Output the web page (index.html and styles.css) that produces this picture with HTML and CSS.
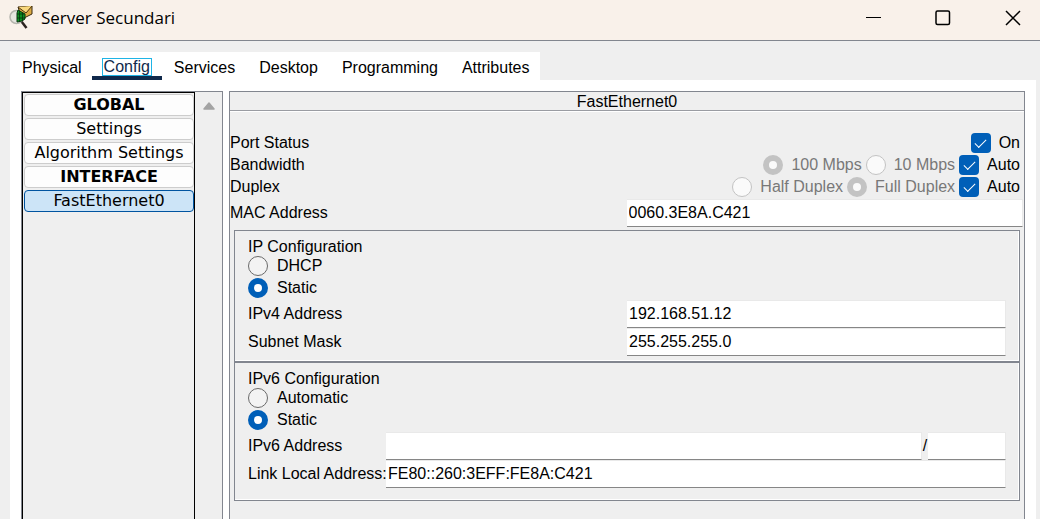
FILE: index.html
```html
<!DOCTYPE html>
<html lang="en">
<head>
<meta charset="utf-8">
<meta name="viewport" content="width=device-width, initial-scale=1">
<title>Server Secundari</title>
<link rel="stylesheet" href="styles.css">
</head>
<body>
<header class="titlebar">
  <svg class="app-icon" viewBox="0 0 24 24" aria-hidden="true">
    <path d="M12.500 15.500 17.500 22" stroke="#2b2320" stroke-width="2.500"/>
    <circle cx="7.500" cy="11" r="6.500" fill="#e6e6e0" stroke="#b5b5ae" stroke-width="1.500"/>
    <path d="M9 1 23 0v8L13 13z" fill="#dcab45" stroke="#3b2a10"/>
    <path d="M9 1l8 6 6-7" fill="#f8d77c" stroke="#4a3413"/>
    <path d="M9 4l7 4v5l-3 2-5 1V7z" fill="#0d8f22" stroke="#0a3510"/>
    <path d="M8 8h7M8 12h8M10.500 5v10M13.500 7v8" stroke="#06330d" fill="none" stroke-width=".8"/>
  </svg>
  <h1 class="title">Server Secundari</h1>
  <div class="window-buttons">
    <button class="window-button" type="button" aria-label="Minimize"><svg viewBox="0 0 16 16"><path d="M1 7.500h15"/></svg></button>
    <button class="window-button" type="button" aria-label="Maximize"><svg viewBox="0 0 16 16"><rect class="thick" x="1" y="1" width="13.500" height="13.500" rx="1.500"/></svg></button>
    <button class="window-button" type="button" aria-label="Close"><svg viewBox="0 0 16 16"><path class="thick" d="M1 1l14 14M15 1 1 15"/></svg></button>
  </div>
</header>
<main class="window">
  <nav class="tabs">
    <button class="tab" type="button">Physical</button>
    <button class="tab tab-active" type="button"><span class="tab-focus">Config</span></button>
    <button class="tab" type="button">Services</button>
    <button class="tab" type="button">Desktop</button>
    <button class="tab" type="button">Programming</button>
    <button class="tab" type="button">Attributes</button>
  </nav>
  <div class="content">
    <aside class="sidebar">
      <div class="side-list">
        <button class="side-button side-heading" type="button">GLOBAL</button>
        <button class="side-button" type="button">Settings</button>
        <button class="side-button" type="button">Algorithm Settings</button>
        <button class="side-button side-heading" type="button">INTERFACE</button>
        <button class="side-button side-selected" type="button">FastEthernet0</button>
      </div>
      <div class="scrollbar">
        <button class="scroll-up" type="button" aria-label="Scroll up"><svg viewBox="0 0 12 8"><path d="M6 1 11 7H1z" fill="#a3a3a3" stroke="#a3a3a3" stroke-width="1.500" stroke-linejoin="round"/></svg></button>
      </div>
    </aside>
    <section class="panel">
      <h2 class="panel-title">FastEthernet0</h2>
      <div class="settings">
        <div class="line">
          <span>Port Status</span>
          <div class="options">
            <label class="option"><input class="check" type="checkbox" checked>On</label>
          </div>
        </div>
        <div class="line">
          <span>Bandwidth</span>
          <div class="options">
            <label class="option option-off"><input class="radio" type="radio" name="bandwidth" checked disabled>100 Mbps</label>
            <label class="option option-off"><input class="radio" type="radio" name="bandwidth" disabled>10 Mbps</label>
            <label class="option"><input class="check" type="checkbox" checked>Auto</label>
          </div>
        </div>
        <div class="line">
          <span>Duplex</span>
          <div class="options">
            <label class="option option-off"><input class="radio" type="radio" name="duplex" disabled>Half Duplex</label>
            <label class="option option-off"><input class="radio" type="radio" name="duplex" checked disabled>Full Duplex</label>
            <label class="option"><input class="check" type="checkbox" checked>Auto</label>
          </div>
        </div>
        <div class="field field-mac">
          <label for="mac">MAC Address</label>
          <input class="text" id="mac" type="text" value="0060.3E8A.C421">
        </div>
      </div>
      <div class="groups">
        <div class="group" role="group" aria-labelledby="ip-title">
          <h3 class="group-title" id="ip-title">IP Configuration</h3>
          <label class="option"><input class="radio" type="radio" name="ip">DHCP</label>
          <label class="option"><input class="radio" type="radio" name="ip" checked>Static</label>
          <div class="fields">
            <div class="field">
              <label for="ipv4">IPv4 Address</label>
              <input class="text" id="ipv4" type="text" value="192.168.51.12">
            </div>
            <div class="field">
              <label for="mask">Subnet Mask</label>
              <input class="text" id="mask" type="text" value="255.255.255.0">
            </div>
          </div>
        </div>
        <div class="group group-v6" role="group" aria-labelledby="ipv6-title">
          <h3 class="group-title" id="ipv6-title">IPv6 Configuration</h3>
          <label class="option"><input class="radio" type="radio" name="ipv6">Automatic</label>
          <label class="option"><input class="radio" type="radio" name="ipv6" checked>Static</label>
          <div class="fields">
            <div class="field field-wide">
              <label for="ipv6">IPv6 Address</label>
              <div class="prefixed">
                <input class="text" id="ipv6" type="text">
                <span class="slash">/</span>
                <input class="text prefix" type="text" aria-label="Prefix length">
              </div>
            </div>
            <div class="field field-wide">
              <label for="link-local">Link Local Address:</label>
              <input class="text" id="link-local" type="text" value="FE80::260:3EFF:FE8A:C421">
            </div>
          </div>
        </div>
      </div>
    </section>
  </div>
</main>
</body>
</html>
```

FILE: styles.css
```css
* { box-sizing: border-box; }

body {
  margin: 0;
  min-height: 100vh;
  display: flex;
  flex-direction: column;
  background: #efefef;
  color: #000;
  font: 16px/20px "Liberation Sans", Arial, sans-serif;
}

button, input { font: inherit; color: inherit; margin: 0; }
button { border: 0; padding: 0; background: none; }
h1, h2, h3 { margin: 0; font-weight: 400; font-size: 16px; }

.titlebar {
  display: flex;
  align-items: center;
  height: 41px;
  padding: 0 4px 5px 9px;
  background: #f9f1ea;
  border-bottom: 1px solid #82868f;
}
.app-icon { width: 24px; height: 24px; margin-right: 8px; }
.title { flex: 1; font: 17px/24px "Open Sans", "Noto Sans", sans-serif; }
.window-buttons { display: flex; gap: 24px; }
.window-button { display: grid; place-items: center; width: 46px; height: 34px; }
.window-button svg { width: 16px; height: 16px; fill: none; stroke: #000; }
.window-button .thick { stroke-width: 1.5; }

.window {
  flex: 1;
  display: flex;
  flex-direction: column;
  padding: 11px 4px 0 10px;
}
.tabs { display: flex; align-self: flex-start; background: #fff; }
.tab { height: 28px; padding: 6px 12px 0; border-bottom: 4px solid transparent; line-height: 20px; }
.tab:first-child, .tab:last-child { padding-right: 10px; }
.tab-active { padding: 6px 11px 0; border-bottom-color: #10294b; color: #10294b; }
.tab-focus { display: block; padding: 0 1px; height: 16px; line-height: 16px; outline: 1px solid #1fb4e6; }

.content {
  flex: 1;
  display: flex;
  gap: 6px;
  padding: 11px 11px 0;
  background: #fff;
}
.sidebar { display: flex; width: 202px; border: 1px solid #82868f; border-bottom: 0; background: #efefef; }
.side-list {
  flex: 1;
  display: flex;
  flex-direction: column;
  gap: 2px;
  padding: 1px 0 1px 1px;
  border: 1px solid #000;
  border-bottom: 0;
}
.side-button {
  height: 22px;
  border: 1px solid #cdcdcd;
  border-radius: 4px;
  background: #fdfdfd;
  font: 16px/20px "DejaVu Sans", Verdana, sans-serif;
  white-space: nowrap;
}
.side-heading { font-weight: 700; }
.side-selected { background: #cce4f7; border-color: #0054a0; }
.scrollbar { width: 27px; display: flex; justify-content: center; align-items: flex-start; padding-top: 10px; }
.scroll-up { display: flex; }
.scroll-up svg { width: 12px; height: 8px; }

.panel { flex: 1; min-width: 0; border: 1px solid #82868f; border-bottom: 0; background: #efefef; }
.panel-title {
  height: 19px;
  line-height: 19px;
  text-align: center;
  border-bottom: 1px solid #9a9ca2;
  box-shadow: 0 1px #fff;
}
.settings { padding: 21px 1px 3px 0; }
.line { display: flex; justify-content: space-between; align-items: center; height: 22px; }
.options { display: flex; gap: 4px; padding-right: 3px; }
.option { display: flex; align-items: center; gap: 8px; height: 22px; }
.option-off { color: #787878; }

.check, .radio { appearance: none; flex: none; display: grid; place-items: center; width: 20px; height: 20px; }
.check { border-radius: 4px; background: #005fb8; }
.check::before {
  content: "";
  width: 10px;
  height: 5px;
  margin-bottom: 2px;
  border: solid #fff;
  border-width: 0 0 1px 1px;
  transform: rotate(-45deg);
}
.radio { border: 1px solid #6a6a6a; border-radius: 50%; background: #f3f3f3; }
.radio:checked { border: 6px solid #005fb8; background: #fff; }
.radio:disabled { border-color: #c3c3c3; background: #fafafa; }

.field { display: grid; grid-template-columns: 1fr 1fr; align-items: center; }
.field-mac { margin-top: 1px; }
.field-wide { grid-template-columns: 138px 1fr; }
.field label { white-space: nowrap; }
.text {
  width: 100%;
  min-width: 0;
  height: 28px;
  padding: 0 2px;
  border: 1px solid #e9e9e9;
  border-width: 1px 1px 1px 0;
  border-bottom-color: #868686;
  border-radius: 0;
  background: #fff;
  outline: 0;
}

.groups { padding: 0 4px; }
.group {
  padding: 7px 13px 5px;
  border: 1px solid #82868f;
  box-shadow: inset -1px -1px #fff;
}
.group-v6 { padding-bottom: 12px; }
.group-title { line-height: 17px; }
.group .option { gap: 9px; }
.fields { padding-top: 1px; }
.prefixed { display: flex; }
.slash { flex: none; width: 6px; line-height: 28px; text-align: center; }
.prefix { flex: none; width: 78px; }
```
